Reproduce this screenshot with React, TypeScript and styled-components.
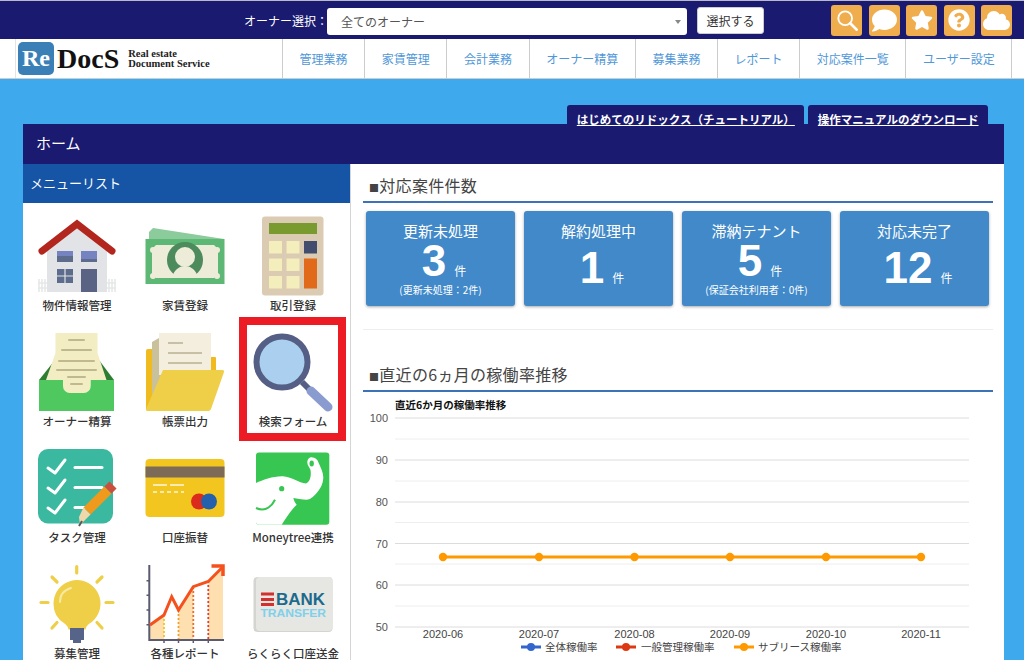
import React from 'react';
import styled, {createGlobalStyle} from 'styled-components';
import {FaCloud, FaComment, FaQuestionCircle, FaStar} from 'react-icons/fa';

const GlobalStyle = createGlobalStyle`
    html, body {
        margin: 0;
        padding: 0;
        height: 660px;
        overflow: hidden;
        background: #3fa9ee;
    }
    body, text {
        font-family: "Noto Sans CJK JP", "Liberation Sans", sans-serif;
    }
`;

const HouseIcon = () => (
    <svg width="80" height="80" viewBox="0 0 80 80">
        <path d="M2 63v13M5 63v13M8 63v13M72 63v13M75 63v13M78 63v13M1 67h9M1 72h9M70 67h9M70 72h9" stroke="#e6e8e8" strokeWidth="1.600" />
        <polygon points="10,33 40,9 70,33 70,76 10,76" fill="#e1e3e6" />
        <polyline points="5,35 40,8 75,35" fill="none" stroke="#b3261e" strokeWidth="7" strokeLinecap="round" strokeLinejoin="miter" />
        <rect x="20" y="35" width="16" height="11" fill="#5d6b8d" />
        <rect x="20" y="35" width="16" height="5" fill="#7584c0" />
        <rect x="44" y="35" width="16" height="11" fill="#7584c0" />
        <rect x="44" y="43" width="16" height="3" fill="#5d6b8d" />
        <rect x="20" y="53" width="16" height="14" fill="#5d6b8d" />
        <path d="M28 53v14M20 60h16" stroke="#e1e3e6" strokeWidth="1.200" />
        <rect x="44" y="53" width="16" height="23" fill="#5a6384" />
    </svg>
);

const MoneyIcon = () => (
    <svg width="80" height="80" viewBox="0 0 80 80">
        <polygon points="8,12 79,23 79,30 4,30 4,16" fill="#8ccb9c" />
        <rect x="0.500" y="23" width="79" height="45" fill="#5cb874" />
        <polygon points="11,29 69,29 73,33 73,58 69,62 11,62 7,58 7,33" fill="#edecd9" />
        <circle cx="40" cy="44" r="18" fill="#4d8a5c" />
        <circle cx="40" cy="41" r="10" fill="#edecd9" />
        <path d="M27 62c2-9 8-12 13-12s11 3 13 12z" fill="#edecd9" />
        <g fill="#edecd9">
            <circle cx="8" cy="34" r="3" />
            <circle cx="72" cy="34" r="3" />
            <circle cx="8" cy="60" r="3" />
            <circle cx="72" cy="60" r="3" />
        </g>
    </svg>
);

const CalculatorIcon = () => (
    <svg width="80" height="80" viewBox="0 0 80 80">
        <rect x="9" y="0.500" width="61.500" height="79" rx="3" fill="#dccbb3" />
        <rect x="16" y="7" width="48" height="11" fill="#789a2f" />
        <g fill="#f3eebb">
            <rect x="16" y="25" width="13" height="12.500" />
            <rect x="33.500" y="25" width="13" height="12.500" />
            <rect x="16" y="42.500" width="13" height="12.500" />
            <rect x="33.500" y="42.500" width="13" height="12.500" />
            <rect x="16" y="60" width="13" height="12.500" />
            <rect x="33.500" y="60" width="13" height="12.500" />
        </g>
        <rect x="51" y="25" width="13" height="12.500" fill="#414c6e" />
        <rect x="51" y="42.500" width="13" height="30" fill="#e06a1a" />
    </svg>
);

const InboxIcon = () => (
    <svg width="80" height="80" viewBox="0 0 80 80">
        <polygon points="2,48 18,28 62,28 77,48" fill="#2e7d32" />
        <path d="M18.500 1h42v20l9 27H53.700v6a7 7 0 0 1-7 7H33a7 7 0 0 1-7-7V48H9l9.500-27z" fill="#f2edc2" />
        <path d="M2 48h24v6a7 7 0 0 0 7 7h13.700a7 7 0 0 0 7-7v-6H77v31H2z" fill="#4fc95f" />
        <g stroke="#c0b990" strokeWidth="2" strokeLinecap="round">
            <path d="M32 8h15" />
            <path d="M25 18h29" />
            <path d="M22 29h35" />
            <path d="M20 38h39" />
            <path d="M31 45h17" />
            <path d="M34 52h11" />
        </g>
    </svg>
);

const FolderIcon = () => (
    <svg width="80" height="80" viewBox="0 0 80 80">
        <path d="M1 19a2 2 0 0 1 2-2h12v62H3a2 2 0 0 1-2-2z" fill="#f0bb1e" />
        <rect x="65" y="25" width="6" height="15" rx="1" fill="#f0bb1e" />
        <polygon points="7,10 14,6 18,42 7,70" fill="#c9c09c" />
        <rect x="14" y="1" width="52" height="42" fill="#f3eedd" />
        <g stroke="#c7c0a4" strokeWidth="2">
            <path d="M23 11h15" />
            <path d="M23 21h34" />
            <path d="M23 31h34" />
        </g>
        <path d="M18 38h59.500a1.500 1.500 0 0 1 1.500 2L66 77a3 3 0 0 1-3 2H3a2 2 0 0 1-2-2z" fill="#efcf48" />
    </svg>
);

const MagnifierIcon = () => (
    <svg width="80" height="80" viewBox="0 0 80 80">
        <path d="M49 50l9 9" stroke="#555f85" strokeWidth="6" />
        <path d="M58 59l17 16" stroke="#8a9ccf" strokeWidth="9" strokeLinecap="round" />
        <circle cx="29" cy="30" r="25.500" fill="#abd0ef" stroke="#555f85" strokeWidth="6" />
    </svg>
);

const TaskIcon = () => (
    <svg width="80" height="80" viewBox="0 0 80 80">
        <rect x="1" y="1" width="75" height="74.500" rx="10" fill="#3ab8a0" />
        <g fill="none" stroke="#fff" strokeWidth="3" strokeLinecap="round" strokeLinejoin="round">
            <path d="M11 20l7 5 10-13" />
            <path d="M11 40l7 5 10-13" />
            <path d="M11 60l7 5 10-13" />
            <path d="M38 19.500h27" />
            <path d="M38 39.500h27" />
            <path d="M38 59.500h12" />
        </g>
        <path d="M50 63l21-21" stroke="#f09a1d" strokeWidth="10" />
        <path d="M71 42l5-5" stroke="#c9503f" strokeWidth="10" />
        <polygon points="46.500,59.500 53.500,66.500 43,77 42,69" fill="#efd9ac" />
        <path d="M45 73l-3 5" stroke="#5a5a5a" strokeWidth="2" />
    </svg>
);

const CardIcon = () => (
    <svg width="80" height="80" viewBox="0 0 80 80">
        <rect x="0.500" y="11" width="79" height="58" rx="4" fill="#f2c61e" />
        <rect x="0.500" y="18.500" width="79" height="11" fill="#7d6b58" />
        <g stroke="#f8eab0" strokeWidth="2">
            <path d="M8 37h14M25 37h14" />
            <path d="M8 44h31" strokeDasharray="4 3" />
        </g>
        <circle cx="54" cy="53.500" r="8" fill="#dc2a1c" />
        <circle cx="64" cy="53.500" r="8" fill="#2560ac" />
    </svg>
);

const MoneytreeIcon = () => (
    <svg width="80" height="80" viewBox="0 0 80 80">
        <rect x="3" y="4.500" width="73.300" height="72.200" rx="3" fill="#37c651" />
        <path d="M3 35C10 32 20 28 30 28.300C38 28.600 46 35 53 35.500C57 34 58.500 28 57.500 22C56.500 19 54.300 17.500 54.300 14.500C54.300 11 56.500 9.300 58.700 9.300C62 9.300 64.500 11.500 65.500 14.500C68 20 70.500 25 70.300 30C69.800 37 67 41 63.700 45C60 49 57 51.700 53.700 51.700C49 51.700 44 50.500 40.300 50C41 52.500 42 55 43.700 56.700C38 62 33 70 28.700 76.700H6a3 3 0 0 1-3-3z" fill="#fff" />
        <path d="M3 60c4 1.800 9 2 12.500-.5 3-2 5-4.700 6.500-7.800" fill="none" stroke="#37c651" strokeWidth="2" />
        <circle cx="28.700" cy="40.700" r="2.600" fill="#37c651" />
        <ellipse cx="58.700" cy="15.500" rx="2.200" ry="3" fill="#37c651" />
    </svg>
);

const BulbIcon = () => (
    <svg width="80" height="80" viewBox="0 0 80 80">
        <g stroke="#efcf48" strokeWidth="3.200" strokeLinecap="round">
            <path d="M39.700 2.500v6.500" />
            <path d="M15 13l5 5" />
            <path d="M65 13l-5 5" />
            <path d="M4 38.500h7" />
            <path d="M69 38.500h7" />
            <path d="M15 64l5-5.500" />
            <path d="M65 64l-5-5.500" />
        </g>
        <path d="M16.500 39.500a23.500 23.500 0 1 1 36 20c-2 1.500-3.500 3-4 6h-17c-.5-3-2-4.500-4-6a23.500 23.500 0 0 1-11-20z" fill="#efcf48" />
        <path d="M23 38c0-7 4-12 11-14" fill="none" stroke="#f6e9a3" strokeWidth="2" strokeLinecap="round" />
        <rect x="33" y="64" width="14" height="12" fill="#556488" />
        <rect x="36" y="76" width="8" height="3" fill="#556488" />
    </svg>
);

const ReportIcon = () => (
    <svg width="80" height="80" viewBox="0 0 80 80">
        <polygon points="4,61 19,51 19,76 4,76" fill="#fddfb0" />
        <polygon points="33.500,46 48.300,23 48.300,76 33.500,76" fill="#fddfb0" />
        <polygon points="63.300,17.500 78,3 78,76 63.300,76" fill="#fddfb0" />
        <g strokeWidth="1.800" strokeDasharray="2 2">
            <path d="M19 51v25" stroke="#f5c518" />
            <path d="M33.500 46v30" stroke="#f2a02b" />
            <path d="M48.300 23v53" stroke="#ee6b2f" />
            <path d="M63.300 17v59" stroke="#e63b2e" />
        </g>
        <path d="M4.300 1v75H79" fill="none" stroke="#5a5a70" strokeWidth="2" />
        <path d="M1.500 60.700h3M1.500 46h3M1.500 31.300h3M1.500 16.700h3M19 76v3M33.500 76v3M48.300 76v3M63.300 76v3" stroke="#5a5a70" strokeWidth="1.500" />
        <polyline points="5,61 19,51 26.700,32.700 33.500,46 48.300,22.700 63.300,17.500 77.700,3" fill="none" stroke="#f4511e" strokeWidth="3" />
        <polyline points="66.500,2 78,2 78,12" fill="none" stroke="#f4511e" strokeWidth="3.500" />
    </svg>
);

const BankIcon = () => (
    <svg width="80" height="80" viewBox="0 0 80 80">
        <rect x="0.500" y="13" width="79" height="55" rx="4" fill="#d4d5d0" />
        <rect x="3" y="13" width="76.500" height="54" rx="4" fill="#e6e6e2" />
        <g fill="#d32f2f">
            <rect x="8" y="28.500" width="13" height="3" />
            <rect x="8" y="34" width="13" height="3" />
            <rect x="8" y="39" width="13" height="3" />
        </g>
        <text x="23" y="41" fontSize="16" fontWeight="700" fill="#1c6a8c" textLength="49" lengthAdjust="spacingAndGlyphs" style={{fontFamily: '"Liberation Sans", sans-serif'}}>BANK</text>
        <text x="7.500" y="53" fontSize="11" fontWeight="700" fill="#7fd0ea" textLength="65.500" lengthAdjust="spacingAndGlyphs" style={{fontFamily: '"Liberation Sans", sans-serif'}}>TRANSFER</text>
    </svg>
);

const menuItems = [
    {label: '物件情報管理', icon: <HouseIcon />},
    {label: '家賃登録', icon: <MoneyIcon />},
    {label: '取引登録', icon: <CalculatorIcon />},
    {label: 'オーナー精算', icon: <InboxIcon />},
    {label: '帳票出力', icon: <FolderIcon />},
    {label: '検索フォーム', icon: <MagnifierIcon />, highlighted: true},
    {label: 'タスク管理', icon: <TaskIcon />},
    {label: '口座振替', icon: <CardIcon />},
    {label: 'Moneytree連携', icon: <MoneytreeIcon />},
    {label: '募集管理', icon: <BulbIcon />},
    {label: '各種レポート', icon: <ReportIcon />},
    {label: 'らくらく口座送金', icon: <BankIcon />},
];

const navItems = ['管理業務', '家賃管理', '会計業務', 'オーナー精算', '募集業務', 'レポート', '対応案件一覧', 'ユーザー設定'];

const caseCards = [
    {title: '更新未処理', count: 3, note: '(更新未処理：2件)'},
    {title: '解約処理中', count: 1},
    {title: '滞納テナント', count: 5, note: '(保証会社利用者：0件)'},
    {title: '対応未完了', count: 12},
];

const gridLines = [418, 439, 460, 481, 502, 522.5, 543.5, 564, 585, 606, 627];
const yLabels = [[100, 418], [90, 460], [80, 502], [70, 543.5], [60, 585], [50, 627]];
const points = [
    {x: 443, label: '2020-06'},
    {x: 539, label: '2020-07'},
    {x: 634.5, label: '2020-08'},
    {x: 730, label: '2020-09'},
    {x: 826, label: '2020-10'},
    {x: 921, label: '2020-11'},
];
const legend = [
    {x: 521, textX: 545, color: '#3366cc', label: '全体稼働率'},
    {x: 616, textX: 641, color: '#dc3912', label: '一般管理稼働率'},
    {x: 734, textX: 758, color: '#ff9900', label: 'サブリース稼働率'},
];

const OccupancyChart = () => (
    <ChartSvg viewBox="363 392 629 268">
        <text x="395" y="409" fontSize="10.500" fontWeight="700" fill="#111">直近6か月の稼働率推移</text>
        {gridLines.map((y, i) => (
            <line key={y} x1="395" x2="969" y1={y} y2={y} stroke={i % 2 === 0 ? '#dcdcdc' : '#eeeeee'} strokeWidth="1" />
        ))}
        {yLabels.map(([value, y]) => (
            <text key={value} x="388" y={y + 4} fontSize="11" textAnchor="end" fill="#555" style={{fontFamily: '"Liberation Sans", sans-serif'}}>{value}</text>
        ))}
        <line x1="443" x2="921" y1="557" y2="557" stroke="#ff9900" strokeWidth="3" />
        {points.map(point => (
            <circle key={point.x} cx={point.x} cy="557" r="4.200" fill="#ff9900" />
        ))}
        {points.map(point => (
            <text key={point.label} x={point.x} y="638" fontSize="11" textAnchor="middle" fill="#444" style={{fontFamily: '"Liberation Sans", sans-serif'}}>{point.label}</text>
        ))}
        {legend.map(item => (
            <g key={item.label}>
                <line x1={item.x} x2={item.x + 20} y1="647" y2="647" stroke={item.color} strokeWidth="3" />
                <circle cx={item.x + 10} cy="647" r="4" fill={item.color} />
                <text x={item.textX} y="651" fontSize="10.500" fill="#444">{item.label}</text>
            </g>
        ))}
    </ChartSvg>
);

const App = () => {
    return (
        <Page>
            <GlobalStyle />
            <TopBar>
                <OwnerLabel>オーナー選択：</OwnerLabel>
                <OwnerSelect>
                    全てのオーナー
                    <Caret />
                </OwnerSelect>
                <SelectButton>選択する</SelectButton>
                <ShortcutGroup>
                    <Shortcut>
                        <svg width="22" height="22" viewBox="0 0 24 24" fill="none" stroke="#fff">
                            <circle cx="10" cy="10" r="7.500" strokeWidth="2" />
                            <path d="M15.500 15.500l7 7" strokeWidth="3" strokeLinecap="round" />
                        </svg>
                    </Shortcut>
                    <Shortcut><FaComment size={25} /></Shortcut>
                    <Shortcut><FaStar size={22} /></Shortcut>
                    <Shortcut><FaQuestionCircle size={22} /></Shortcut>
                    <Shortcut><FaCloud size={27} /></Shortcut>
                </ShortcutGroup>
            </TopBar>
            <NavBar>
                <Logo>
                    <LogoBadge>Re</LogoBadge>
                    <LogoName>DocS</LogoName>
                    <LogoTagline>Real estate<br />Document Service</LogoTagline>
                </Logo>
                <NavList>
                    {navItems.map(item => (
                        <NavItem key={item}>{item}</NavItem>
                    ))}
                </NavList>
            </NavBar>
            <Content>
                <Tabs>
                    <Tab>はじめてのリドックス（チュートリアル）</Tab>
                    <Tab>操作マニュアルのダウンロード</Tab>
                </Tabs>
                <Panel>
                    <PanelHeader>ホーム</PanelHeader>
                    <PanelBody>
                        <Sidebar>
                            <SidebarHeader>メニューリスト</SidebarHeader>
                            <MenuGrid>
                                {menuItems.map(item => (
                                    <MenuCell key={item.label}>
                                        {item.icon}
                                        <MenuLabel>{item.label}</MenuLabel>
                                        {item.highlighted && <Highlight />}
                                    </MenuCell>
                                ))}
                            </MenuGrid>
                        </Sidebar>
                        <Main>
                            <SectionTitle><SectionMark>■</SectionMark>対応案件件数</SectionTitle>
                            <Cards>
                                {caseCards.map(card => (
                                    <Card key={card.title}>
                                        <CardTitle>{card.title}</CardTitle>
                                        <CardCount $hasNote={!!card.note}>
                                            {card.count}<CardUnit>件</CardUnit>
                                        </CardCount>
                                        {card.note && <CardNote>{card.note}</CardNote>}
                                    </Card>
                                ))}
                            </Cards>
                            <Divider />
                            <SectionTitle><SectionMark>■</SectionMark>直近の6ヵ月の稼働率推移</SectionTitle>
                            <OccupancyChart />
                        </Main>
                    </PanelBody>
                </Panel>
            </Content>
        </Page>
    );
};

const Page = styled.div`
    width: 1024px;
    height: 660px;
    overflow: hidden;
    background: #3fa9ee;
`;

const TopBar = styled.div`
    display: flex;
    align-items: center;
    height: 39px;
    box-sizing: border-box;
    border-top: 1px solid #b9b9c9;
    padding-left: 244px;
    background: #1a1a70;
    color: #fff;
`;

const OwnerLabel = styled.span`
    width: 83px;
    font-size: 12px;
    white-space: nowrap;
`;

const OwnerSelect = styled.div`
    position: relative;
    width: 360px;
    height: 27px;
    margin-top: 2px;
    box-sizing: border-box;
    padding-left: 14px;
    line-height: 27px;
    font-size: 12px;
    color: #555;
    background: #fff;
    border-radius: 3px;
`;

const Caret = styled.i`
    position: absolute;
    right: 6px;
    top: 12px;
    border: 3px solid transparent;
    border-top: 4px solid #888;
    border-bottom: 0;
`;

const SelectButton = styled.button`
    width: 67px;
    height: 27px;
    margin-left: 10px;
    padding: 0;
    font-family: inherit;
    font-size: 12px;
    color: #333;
    background: #fff;
    border: 1px solid #ccc;
    border-radius: 3px;
`;

const ShortcutGroup = styled.div`
    display: flex;
    gap: 6.600px;
    margin-left: 67px;
`;

const Shortcut = styled.div`
    display: flex;
    align-items: center;
    justify-content: center;
    width: 31px;
    height: 31px;
    color: #fff;
    background: #f0ad4e;
    border-radius: 3px;
`;

const NavBar = styled.div`
    display: flex;
    height: 40px;
    box-sizing: border-box;
    background: #fff;
    border-bottom: 1px solid #ccc;
`;

const Logo = styled.div`
    display: flex;
    align-items: center;
    width: 267px;
    margin-left: 15px;
    padding-left: 2px;
    box-sizing: border-box;
    border-left: 1px solid #e4e4e4;
    font-family: "Liberation Serif", serif;
    font-weight: 700;
`;

const LogoBadge = styled.div`
    width: 36px;
    height: 33px;
    line-height: 32px;
    text-align: center;
    font-size: 24px;
    color: #fff;
    background: #3a7fb5;
    border-radius: 5px;
`;

const LogoName = styled.div`
    margin-left: 3px;
    font-size: 28px;
    color: #111;
`;

const LogoTagline = styled.div`
    margin-left: 9px;
    font-size: 10.500px;
    line-height: 10px;
    color: #222;
`;

const NavList = styled.div`
    display: flex;
`;

const NavItem = styled.div`
    display: flex;
    align-items: center;
    padding: 0 16.600px;
    font-size: 12px;
    white-space: nowrap;
    color: #5097d8;
    border-left: 1px solid #ccc;

    &:last-child {
        border-right: 1px solid #ccc;
    }
`;

const Content = styled.div`
    padding: 26px 20px 0 23px;
`;

const Tabs = styled.div`
    position: relative;
    display: flex;
    justify-content: flex-end;
    gap: 4px;
    padding-right: 16px;
    margin-bottom: -4px;
`;

const Tab = styled.div`
    height: 23px;
    padding: 0 9.500px;
    box-sizing: border-box;
    font-size: 11.500px;
    font-weight: 700;
    line-height: 29px;
    color: #fff;
    text-decoration: underline;
    white-space: nowrap;
    background: #1a1a70;
    border-radius: 3px 3px 0 0;
`;

const Panel = styled.div`
    background: #fff;
`;

const PanelHeader = styled.div`
    height: 40px;
    padding-left: 13px;
    line-height: 38px;
    font-size: 15px;
    color: #fff;
    background: #1a1a70;
`;

const PanelBody = styled.div`
    display: flex;
`;

const Sidebar = styled.div`
    width: 327px;
    flex-shrink: 0;
`;

const SidebarHeader = styled.div`
    height: 39px;
    padding-left: 7px;
    line-height: 37px;
    font-size: 13px;
    color: #fff;
    background: #1655a5;
`;

const MenuGrid = styled.div`
    display: grid;
    grid-template-columns: repeat(3, 108px);
    grid-auto-rows: 116px;
    padding-top: 13px;
`;

const MenuCell = styled.div`
    position: relative;
    display: flex;
    flex-direction: column;
    align-items: center;

    svg {
        display: block;
    }
`;

const MenuLabel = styled.div`
    margin-top: 2px;
    font-size: 11.500px;
    font-weight: 500;
    line-height: 14px;
    color: #333;
    white-space: nowrap;
`;

const Highlight = styled.div`
    position: absolute;
    left: 0;
    top: -15px;
    width: 107px;
    height: 124px;
    box-sizing: border-box;
    border: 8px solid #ed1c24;
`;

const Main = styled.div`
    flex: 1;
    padding: 12px 12px 0 12px;
    border-left: 1px solid #d5d5d5;
`;

const SectionTitle = styled.h2`
    height: 25px;
    margin: 0;
    padding-left: 6px;
    font-size: 16px;
    font-weight: 400;
    line-height: 19px;
    letter-spacing: 0.3px;
    color: #444;
    border-bottom: 2px solid #3b72b8;
`;

const SectionMark = styled.span`
    font-size: 10px;
`;

const Cards = styled.div`
    display: flex;
    gap: 9px;
    margin: 8px 4px 0 3px;
`;

const Card = styled.div`
    width: 149px;
    height: 95px;
    padding-top: 10px;
    box-sizing: border-box;
    text-align: center;
    color: #fff;
    background: #4189c9;
    border-radius: 3px;
    box-shadow: 0 1px 3px rgba(0, 0, 0, 0.35);
`;

const CardTitle = styled.div`
    font-size: 15px;
    line-height: 20px;
`;

const CardCount = styled.div<{$hasNote: boolean}>`
    height: 40px;
    margin-top: ${props => (props.$hasNote ? '0' : '7px')};
    padding-left: 7px;
    font-family: "Liberation Sans", sans-serif;
    font-size: 44px;
    font-weight: 700;
    line-height: 40px;
`;

const CardUnit = styled.span`
    margin-left: 8px;
    font-family: "Noto Sans CJK JP", sans-serif;
    font-size: 12px;
    font-weight: 400;
    line-height: 1;
`;

const CardNote = styled.div`
    margin-top: 2px;
    font-size: 10px;
    line-height: 14px;
`;

const Divider = styled.div`
    height: 1px;
    margin: 23px 0 35px;
    background: #eee;
`;

const ChartSvg = styled.svg`
    display: block;
    width: 629px;
    height: 268px;
`;

export default App;
